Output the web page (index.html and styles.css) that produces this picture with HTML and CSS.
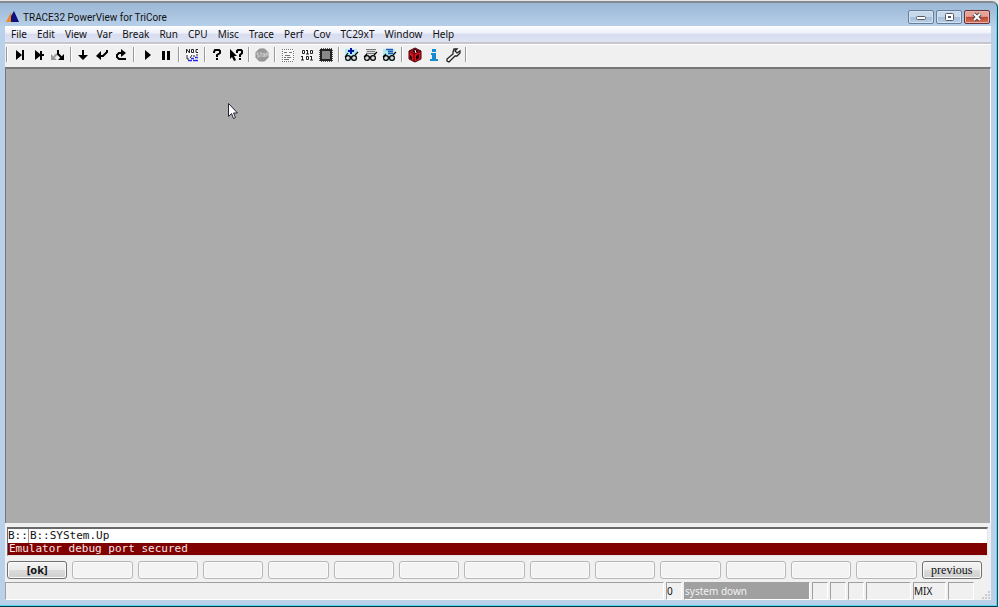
FILE: index.html
```html
<!DOCTYPE html>
<html lang="en">
<head>
<meta charset="utf-8">
<title>TRACE32 PowerView for TriCore</title>
<link rel="stylesheet" href="styles.css">
</head>
<body>
<div class="window">
  <header class="titlebar">
    <svg class="logo" viewBox="0 0 14 12"><path d="M0 11 5 1v10z" fill="#f08a24"/><path d="M5 11V5L8 0l5 11z" fill="#10107c"/></svg>
    <h1>TRACE32 PowerView for TriCore</h1>
    <div class="captions">
      <button class="cap" aria-label="Minimize"><svg viewBox="0 0 14 10"><rect x="2.500" y="4.500" width="9" height="3" rx="1" fill="#fff" stroke="#555b66"/></svg></button>
      <button class="cap" aria-label="Restore"><svg viewBox="0 0 14 10"><rect x="3.500" y="1.500" width="8" height="7" rx="1" fill="#fff" stroke="#555b66"/><rect x="6" y="4" width="3" height="2" fill="#555b66"/></svg></button>
      <button class="cap close" aria-label="Close"><svg viewBox="0 0 14 10"><path d="m4 2 6 6m0-6L4 8" stroke="#4d4450" stroke-width="4"/><path d="m4 2 6 6m0-6L4 8" stroke="#fff" stroke-width="2"/></svg></button>
    </div>
  </header>
  <main class="client">
    <nav class="menu">
      <button>File</button><button>Edit</button><button>View</button><button>Var</button><button>Break</button><button>Run</button><button>CPU</button><button>Misc</button><button>Trace</button><button>Perf</button><button>Cov</button><button>TC29xT</button><button>Window</button><button>Help</button>
    </nav>
    <div class="toolbar">
      <div class="tools">
        <i class="sep"></i>
        <div class="group">
          <button aria-label="Step"><svg viewBox="0 0 16 16"><path d="M4 3v10l6-5z"/><path d="M10 3h2v10h-2z"/></svg></button>
          <button aria-label="Step over"><svg viewBox="0 0 16 16"><path d="M4 3v10l5-4v4h2V9h2V7h-2V4H9v3z"/></svg></button>
          <button aria-label="Step diverge"><svg viewBox="0 0 16 16"><path d="M7 7 4 10" stroke="#999" stroke-width="2"/><path d="M1 7v6h6z" fill="#999"/><path d="M8 3v4l4 4" fill="none" stroke="#000" stroke-width="2"/><path d="M14 7v6H8z"/></svg></button>
        </div>
        <i class="sep"></i>
        <div class="group">
          <button aria-label="Next"><svg viewBox="0 0 16 16"><path d="M7 3h2v5h4l-5 5-5-5h4z"/></svg></button>
          <button aria-label="Return"><svg viewBox="0 0 16 16"><path d="M13 3v2L9 9H6" fill="none" stroke="#000" stroke-width="2"/><path d="m2 9 5-5v9z"/></svg></button>
          <button aria-label="Up"><svg viewBox="0 0 16 16"><path d="M9 6H6L4 8v2l2 2h7" fill="none" stroke="#000" stroke-width="2"/><path d="m8 2 5 4-5 4z"/></svg></button>
        </div>
        <i class="sep"></i>
        <div class="group">
          <button aria-label="Go"><svg viewBox="0 0 16 16"><path d="M6 3v10l6-5z"/></svg></button>
          <button aria-label="Break"><svg viewBox="0 0 16 16"><path d="M4 4h3v9H4zM9 4h3v9H9z"/></svg></button>
        </div>
        <i class="sep"></i>
        <div class="group">
          <button aria-label="Mode"><svg viewBox="0 0 16 16"><path fill="#fafafa" d="M2 2h12v12H2z"/><path d="M2.500 6V2l3 4V2M7.500 2.500h2v3h-2zM14 2.500h-2v3h2M3 8v4h2M8 8 6 11M9 9h2M12 8h2" fill="none" stroke="#222"/><path d="M7 11.500h3M11 10.500h3M4 13.500h4M9 13.500h5" stroke="#2727e8" stroke-width="1.400"/></svg></button>
        </div>
        <i class="sep"></i>
        <div class="group">
          <button aria-label="Help"><svg viewBox="0 0 16 16"><path d="M5 6V5l1-2h4l1 1v2L8 8v2" fill="none" stroke="#000" stroke-width="2"/><path d="M7 11h2v2H7z"/></svg></button>
          <button aria-label="Context help"><svg viewBox="0 0 16 16"><path d="M2 2v10l2-2 2 4 2-1-2-4h3z"/><path d="M9 6V4l1-1h3l1 1v2l-2 2v2" fill="none" stroke="#000" stroke-width="2"/><path d="M11 11h2v2h-2z"/></svg></button>
        </div>
        <i class="sep"></i>
        <div class="group">
          <button aria-label="Stop" disabled><svg viewBox="0 0 16 16"><path d="M5.500 2h5L14 5.500v5L10.500 14h-5L2 10.500v-5z" fill="#999" stroke="#8c8c8c"/><path d="M5 6H3v2h2v2H3M6 6h2M7 6v4M9 6.500h1.500v3H9zM12 10V6h2v2h-2" fill="none" stroke="#ccc"/></svg></button>
        </div>
        <i class="sep"></i>
        <div class="group">
          <button aria-label="List"><svg viewBox="0 0 16 16"><path fill="#f8f8f8" d="M2 2h12v13H2z"/><path d="M2 2.500h12M2.500 4v10M13.500 4v10M2 14.500h12" stroke="#777" stroke-dasharray="1 1"/><path d="M4 5.500h3M9 5.500h3M5 8.500h5M4 10.500h2M7 10.500h4M4 12.500h5" stroke="#777"/></svg></button>
          <button aria-label="Dump"><svg viewBox="0 0 16 16"><path fill="#f8f8f8" d="M2 2h12v12H2z"/><path d="M3.500 3.500h2v3h-2zM8.500 3v4M7 3.500h1M7 7h3M11.500 3.500h2v3h-2zM3.500 9v4M2 9.500h1M2 13h3M7.500 9.500h2v3h-2zM12.500 9v4M11 9.500h1M11 13h3" fill="none" stroke="#222"/></svg></button>
          <button aria-label="Registers"><svg viewBox="0 0 16 16"><path d="M3 3h10v10H3z" fill="#777" stroke="#222" stroke-width="2"/><path d="M1.500 3v11M14.500 3v11M3 1.500h11M3 14.500h11" stroke="#555" stroke-dasharray="1 1"/><path d="M4 4h8v8H4z" fill="#888"/></svg></button>
        </div>
        <i class="sep"></i>
        <div class="group">
          <button aria-label="Add watch"><svg viewBox="0 0 16 16"><path fill="#aee9ee" d="M2 2h12v12H2z"/><circle cx="5" cy="11" r="2.400" fill="#ddd" stroke="#000" stroke-width="1.200"/><circle cx="11" cy="11" r="2.400" fill="#ddd" stroke="#000" stroke-width="1.200"/><path d="M2 10 5 6M12 8l3-3M7 10h2" stroke="#000" stroke-width="1.200"/><path d="M8 1v6M5 4h6" stroke="#0712a5" stroke-width="2"/></svg></button>
          <button aria-label="Watch"><svg viewBox="0 0 16 16"><path fill="#ddd" d="M4 2h10v9H4z"/><path d="M4 2.500h10M5 4.500h8M4 6.500h9" stroke="#777"/><circle cx="5" cy="11" r="2.400" fill="#ddd" stroke="#000" stroke-width="1.200"/><circle cx="11" cy="11" r="2.400" fill="#ddd" stroke="#000" stroke-width="1.200"/><path d="M2 10 5 7M12 8l3-3M7 10h2" stroke="#000" stroke-width="1.200"/></svg></button>
          <button aria-label="Local variables"><svg viewBox="0 0 16 16"><path fill="#aee9ee" d="M2 2h12v12H2z"/><path d="M5 2.500h7M7 4.500h5M7 6.500h5" stroke="#2258ba" stroke-width="1.500"/><circle cx="5" cy="11" r="2.400" fill="#ddd" stroke="#000" stroke-width="1.200"/><circle cx="11" cy="11" r="2.400" fill="#ddd" stroke="#000" stroke-width="1.200"/><path d="M2 10 5 7M12 8l3-3M7 10h2" stroke="#000" stroke-width="1.200"/></svg></button>
        </div>
        <i class="sep"></i>
        <div class="group">
          <button aria-label="Chip"><svg viewBox="0 0 16 16"><path d="m8 1 6 3v8l-6 3-6-3V4z" fill="#d51420" stroke="#440006"/><path d="m2 4 5 3v8M7 7l7-3" fill="none" stroke="#54000a"/><path d="M5 4 8 2l4 2-4 2zM9 9l3-2v4l-3 2zM3 8l2 2v3l-2-2z" fill="#210004"/><path d="m8 3 1 3" stroke="#fff" fill="none"/></svg></button>
          <button aria-label="Information"><svg viewBox="0 0 16 16"><path d="M6 2h4v3H6zM5 6h5v6h2v2H4v-2h2V8H5z" fill="#168bd2"/></svg></button>
          <button aria-label="Settings"><svg viewBox="0 0 16 16"><path d="M9 2 8 5v2l-6 5v2l2 1 6-6h2l3-3V4l-3 2-2-2 2-2z" fill="#f5f5f5" stroke="#222" stroke-width="1.300"/></svg></button>
        </div>
        <i class="sep"></i>
      </div>
    </div>
    <section class="workspace" aria-label="Workspace">
      <svg class="pointer" viewBox="0 0 11 17"><path d="M.5.500v13l3-3 2 5 2-1-2-4.500h4z" fill="#fff" stroke="#222433"/></svg>
    </section>
    <section class="console">
      <div class="command"><label for="cmd">B::</label><input id="cmd" value="B::SYStem.Up" spellcheck="false"></div>
      <output class="message">Emulator debug port secured</output>
    </section>
    <div class="softkeys">
      <button class="ok">[ok]</button><button disabled></button><button disabled></button><button disabled></button><button disabled></button><button disabled></button><button disabled></button><button disabled></button><button disabled></button><button disabled></button><button disabled></button><button disabled></button><button disabled></button><button disabled></button><button class="previous">previous</button>
    </div>
    <footer class="status">
      <span class="fill"></span><span class="small">0</span><span class="state">system down</span><span class="small"></span><span class="small"></span><span class="small"></span><span class="wide"></span><span class="mode">MIX</span><span class="mark"></span>
      <svg class="grip" viewBox="0 0 8 8"><path d="M6 0h2v2H6zM3 3h2v2H3zM6 3h2v2H6zM0 6h2v2H0zM3 6h2v2H3zM6 6h2v2H6z" fill="#ccc"/></svg>
    </footer>
  </main>
</div>
</body>
</html>
```
FILE: styles.css
```css
* { box-sizing: border-box; }
body {
  margin: 0;
  height: 100vh;
  padding: 1px 1px 0 0;
  background: #e4e8ea;
  font-family: "Noto Sans", "Open Sans", sans-serif;
  font-size: 10px;
  color: #111;
}
button, input { font: inherit; color: inherit; }
svg { display: block; }
.window {
  height: 100%;
  display: flex;
  flex-direction: column;
  padding: 0 6px 6px 5px;
  background: linear-gradient(#9bb7d5, #b9d1ea 25px, #b9d1ea);
  border-top: 2px solid #85898c;
  border-right: 1px solid #174d59;
  border-bottom: 1px solid #063f4a;
  border-radius: 0 6px 0 0;
  box-shadow: inset -1px -1px #55d5ed;
}
.titlebar {
  height: 23px;
  flex: none;
  display: flex;
  align-items: center;
  padding: 5px 1px 0 1px;
}
.logo { width: 14px; height: 12px; }
h1 { flex: 1; margin: 0 0 0 3px; font-family: Roboto, sans-serif; font-size: 10px; font-weight: 400; }
.captions { display: flex; gap: 2px; }
.cap {
  width: 26px;
  height: 14px;
  padding: 0;
  display: grid;
  place-items: center;
  border: 1px solid #657e9c;
  border-radius: 2px;
  background: linear-gradient(#c8d9eb 50%, #a3bdd8 50%, #b8d0e8);
  box-shadow: inset 0 0 0 1px #d3e2f1;
}
.cap svg { width: 14px; height: 10px; }
.close {
  border-color: #65323a;
  background: linear-gradient(#e5a397 45%, #bf432e 50%, #d5765b);
  box-shadow: inset 0 0 0 1px #e9b2a6;
}
.client {
  flex: 1;
  min-height: 0;
  display: flex;
  flex-direction: column;
  background: #f0f0f0;
}
.menu {
  height: 18px;
  flex: none;
  display: flex;
  gap: 10px;
  align-items: center;
  padding: 0 6px;
  background: linear-gradient(#fff, #edf0fa 45%, #d7dcef 50%, #dfe4f4);
  border-bottom: 2px solid #c7c7cb;
}
.menu button { border: 0; padding: 0; background: none; }
.toolbar { height: 23px; flex: none; padding: 0 1px; border-top: 1px solid #fff; }
.tools { width: 461px; height: 19px; display: flex; justify-content: space-between; align-items: center; }
.sep { width: 2px; height: 15px; border-left: 1px solid #999; border-right: 1px solid #fff; }
.group { display: flex; }
.group button { width: 19px; height: 18px; padding: 0; border: 0; background: none; display: grid; place-items: center; }
.group svg { width: 16px; height: 16px; }
.workspace {
  flex: 1;
  position: relative;
  background: #ababab;
  border-top: 2px solid #777;
  border-left: 1px solid #777;
  border-right: 1px solid #fff;
}
.pointer { position: absolute; left: 222px; top: 34px; width: 11px; height: 17px; }
.console {
  margin: 4px 3px 0 2px;
  border: 1px solid #e3e3e3;
  border-top: 2px solid #696969;
  border-left-color: #696969;
  font-family: "DejaVu Sans Mono", monospace;
  font-size: 11px;
  line-height: 14px;
}
.command { height: 14px; display: flex; background: #fff; }
.command input { flex: 1; min-width: 0; height: 14px; padding: 0 1px; border: 0; border-left: 1px solid #999; background: none; outline: 0; }
.message { display: block; height: 12px; line-height: 12px; padding-left: 1px; background: #800000; color: #f4e6e6; }
.softkeys { display: flex; gap: 5px; padding: 5px 9px 3px 2px; }
.softkeys button {
  flex: 1 1 0;
  min-width: 0;
  height: 18px;
  padding: 0;
  border: 1px solid #707070;
  border-radius: 3px;
  background: linear-gradient(#f3f3f3, #ebebeb 50%, #dcdcdc 50%, #cfcfcf);
  box-shadow: inset 0 0 0 1px #fafafa;
}
.softkeys button:disabled { border-color: #b4b8bb; background: #f3f3f3; }
.softkeys .ok { font-size: 11px; font-weight: 700; line-height: 14px; }
.softkeys .previous { font-family: "Liberation Serif", serif; font-size: 12px; line-height: 14px; }
.status { display: flex; gap: 2px; height: 18px; font-size: 10px; line-height: 16px; }
.status span { border: 1px solid #fff; border-top-color: #a0a0a0; border-left-color: #a0a0a0; white-space: nowrap; }
.status .fill { flex: 1; }
.status .small { width: 16px; }
.status .state { width: 126px; background: #a0a0a0; color: #f3f3f3; }
.status .wide { width: 45px; }
.status .mode { width: 33px; }
.status .mark { width: 26px; }
.grip { width: 8px; height: 8px; margin: 9px 1px 0 6px; }
```
